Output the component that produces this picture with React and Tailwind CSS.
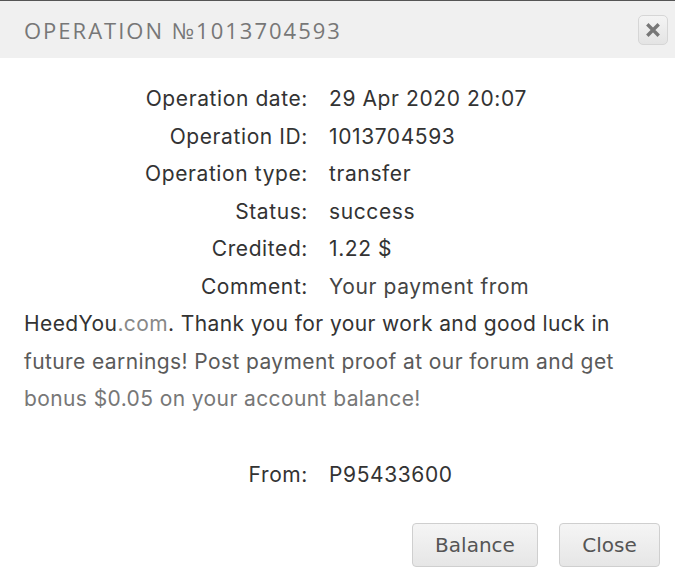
import React from 'react'

const rows = [
  ['Operation date:', '29 Apr 2020 20:07'],
  ['Operation ID:', '1013704593'],
  ['Operation type:', 'transfer'],
  ['Status:', 'success'],
  ['Credited:', '1.22 $'],
]

function Label({ children }) {
  return <span className="inline-block w-[284px] pr-[21px] box-content text-right tracking-[0.6px]">{children}</span>
}

export default function App() {
  return (
    <div className="w-[675px] h-[582px] bg-white flex flex-col border-t border-[#555] overflow-hidden">
      <div className="shrink-0 h-[57px] bg-[#f0f0f0] flex items-center justify-between pl-[24px] pr-[7px]">
        <h1 className="text-[22px] tracking-[2px] text-[#777] font-['Open_Sans',sans-serif] font-normal mt-[1px]">
          OPERATION №1013704593
        </h1>
        <button className="w-[30px] h-[30px] rounded-[5px] border border-[#d6d6d6] bg-gradient-to-b from-[#f4f4f4] to-[#e4e4e4] flex items-center justify-center">
          <svg width="14" height="14" viewBox="0 0 14 14">
            <path d="M2.5 2.5 L11.5 11.5 M11.5 2.5 L2.5 11.5" stroke="#777" strokeWidth="3.4" strokeLinecap="square" />
          </svg>
        </button>
      </div>

      <div className="shrink-0 pl-[24px] pr-[30px] pt-[22px] text-[21px] tracking-[0.6px] leading-[37.5px] text-[#333] font-['Inter',sans-serif]">
        {rows.map(([l, v]) => (
          <div key={l} className="whitespace-nowrap">
            <Label>{l}</Label>
            <span>{v}</span>
          </div>
        ))}
        <div>
          <Label>Comment:</Label>
          <span className="text-[#444]">Your payment from </span>
          <span className="tracking-[0.4px]">
            HeedYou<span className="text-[#888]">.com</span>. Thank you for your work and good luck in{' '}
            <span className="text-[#5a5a5a]">future earnings! Post payment proof at our forum and get </span>
            <span className="text-[#777]">bonus $0.05 on your account balance!</span>
          </span>
        </div>
        <div className="h-[38.5px]" />
        <div className="whitespace-nowrap">
          <Label>From:</Label>
          <span>P95433600</span>
        </div>
      </div>

      <div className="mt-auto flex justify-end gap-[21px] pr-[15px] pb-[15px]">
        <button className="h-[44px] w-[126px] rounded-[4px] border border-[#cfcfcf] bg-gradient-to-b from-[#f5f5f5] to-[#e6e6e6] text-[20px] text-[#555] font-['DejaVu_Sans',sans-serif]">
          Balance
        </button>
        <button className="h-[44px] w-[101px] rounded-[4px] border border-[#cfcfcf] bg-gradient-to-b from-[#f5f5f5] to-[#e6e6e6] text-[20px] text-[#555] font-['DejaVu_Sans',sans-serif]">
          Close
        </button>
      </div>
    </div>
  )
}
